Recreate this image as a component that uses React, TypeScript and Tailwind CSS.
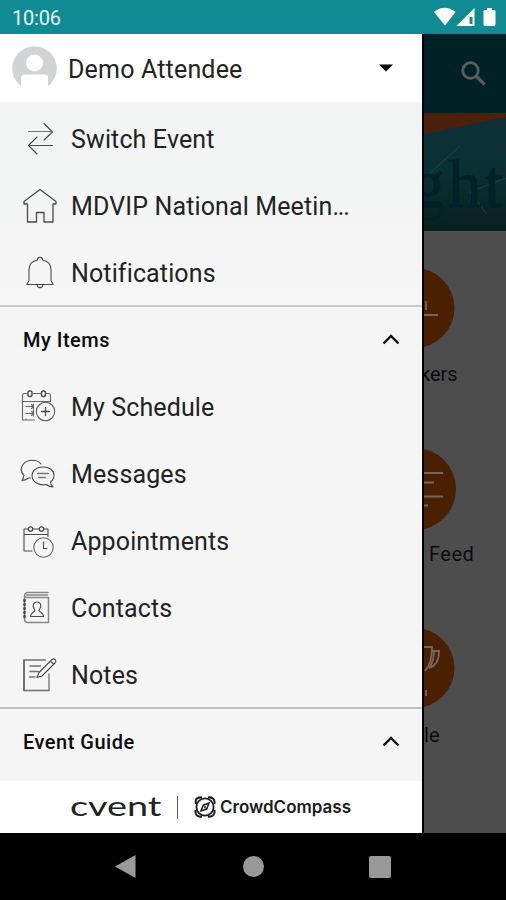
import React from 'react';

type IconProps = { children: React.ReactNode };

const LineIcon: React.FC<IconProps> = ({ children }) => (
  <svg width="40" height="40" viewBox="0 0 40 40" fill="none" stroke="#4a4a4a" strokeWidth="1.1" strokeLinejoin="round" strokeLinecap="round">
    {children}
  </svg>
);

const SwitchIcon = () => (
  <LineIcon>
    <path d="M8.5 11.5H32" stroke="#777" />
    <path d="M24 3.5L32.5 12L24 20" />
    <path d="M32.5 25.5H8.5M17 17L8.5 25.5L17 34" />
  </LineIcon>
);

const HomeIcon = () => (
  <LineIcon>
    <path d="M20 2.5L36 14.5V17H33V35H24V25.5H16.5V35H7.5V17H4V14.5Z" strokeWidth="1.3" />
  </LineIcon>
);

const BellIcon = () => (
  <LineIcon>
    <path d="M17.5 6C17.5 2.5 22.5 2.5 22.5 6C28 7 31 11 31 16V26C31 28 33 28.5 33 30.5H7C7 28.5 9 28 9 26V16C9 11 12 7 17.5 6Z" />
    <path d="M17 31C17.5 34.5 22.5 34.5 23 31" />
  </LineIcon>
);

const ScheduleIcon = () => (
  <LineIcon>
    <path d="M7.5 5.5H4.5Q2.5 5.5 2.5 7.500V13.500H30.500V7.500Q30.500 5.500 28.500 5.500H26M13 5.500H20.500M2.500 13.500V32H14.500M6 18.500H13.500M6 25.500H13.500M6 31V32M13.500 16V28" stroke="#666" />
    <path d="M11.500 16.500L13.500 18.500L11.500 20.500M11.500 23.500L13.500 25.500L11.500 27.500" stroke="#666" />
    <rect x="8" y="3" width="4" height="5.500" rx="1.800" strokeWidth="1.400" />
    <rect x="21.500" y="3" width="4" height="5.500" rx="1.800" strokeWidth="1.400" />
    <circle cx="25.500" cy="23.500" r="9.200" fill="#f5f5f5" stroke="#5c5c5c" />
    <path d="M25.500 19.500V27.500M21.500 23.500H29.500" strokeWidth="1.300" />
  </LineIcon>
);

const MessagesIcon = () => (
  <LineIcon>
    <path d="M21 9C17 4 7 4 3 9.500C0 14 1.500 18 4 20.500C3.500 22.500 3 24 2 25.500C5 25.500 6.500 24.500 8.500 23H10.500" />
    <path d="M23 12C29.500 12 34 15.500 34 20C34 23 32.500 25.500 30.500 27C30.500 29 31.500 30.500 33 32C30 32 28 31 26.500 29.500C19 31 12 27 12 20.500C12 15.500 16.500 12 23 12Z" />
    <path d="M17.500 18.500H28.500M18.500 22.500H25.500" stroke="#777" strokeWidth="1.300" />
  </LineIcon>
);

const AppointmentsIcon = () => (
  <LineIcon>
    <path d="M8 7H4V29H12M12.500 7H19M24 7H28V14.500M4 12.500H28" />
    <circle cx="10.500" cy="7" r="2.200" strokeWidth="1.300" />
    <circle cx="21.500" cy="7" r="2.200" strokeWidth="1.300" />
    <circle cx="23.500" cy="25.500" r="9.700" fill="#f5f5f5" stroke="#666" />
    <path d="M23.500 20V26.500H27" />
  </LineIcon>
);

const ContactsIcon = () => (
  <LineIcon>
    <path d="M28 3.500H8Q5 3.500 4.500 6.500V29.500Q4.500 33.500 8 33.500H28.500V8.500H7Q4.500 8.500 4.500 6.500M6.500 6H27.500" stroke="#888" strokeWidth="1.500" />
    <path d="M4.500 11V30" strokeWidth="2.500" strokeDasharray="1 3" />
    <path d="M17 13C13 13 12.500 17 14 19.500L15 21.500C14 23.500 10.500 23.500 10.500 27.500H23.500C23.500 23.500 20 23.500 19 21.500L20 19.500C21.500 17 21 13 17 13Z" />
  </LineIcon>
);

const NotesIcon = () => (
  <LineIcon>
    <path d="M25.500 4H4V34.500H29V18M10 10H20.500M10 15.500H18.500M9.500 21H15" stroke="#707070" strokeWidth="1.300" />
    <path d="M4 4V34.500" />
    <path d="M19 16.500L32 3.500Q34 2 35.500 4Q36.500 5.500 35 7L22 20L17 21.500Z M30.500 5L33.500 8" />
  </LineIcon>
);

type MenuItem = { label: string; icon: React.FC; truncated?: boolean };

const EVENT_LINKS: MenuItem[] = [
  { label: 'Switch Event', icon: SwitchIcon },
  { label: 'MDVIP National Meetin', icon: HomeIcon, truncated: true },
  { label: 'Notifications', icon: BellIcon },
];

const MY_ITEMS: MenuItem[] = [
  { label: 'My Schedule', icon: ScheduleIcon },
  { label: 'Messages', icon: MessagesIcon },
  { label: 'Appointments', icon: AppointmentsIcon },
  { label: 'Contacts', icon: ContactsIcon },
  { label: 'Notes', icon: NotesIcon },
];

const MenuRow: React.FC<{ item: MenuItem }> = ({ item }) => {
  const Icon = item.icon;
  return (
    <div className="flex h-[67px] shrink-0 items-center gap-[11px] pl-5">
      <Icon />
      <span className="text-[25px] leading-[30px] tracking-[0.13px] whitespace-nowrap text-[#222]">
        {item.label}
        {item.truncated && <span className="tracking-[-1.2px]">...</span>}
      </span>
    </div>
  );
};

const SectionHeader: React.FC<{ title: string }> = ({ title }) => (
  <div className="flex h-[67px] shrink-0 items-center justify-between pr-[22px] pb-0.5 pl-[23px]">
    <span className="text-[20px] leading-6 font-medium tracking-[0.5px] text-[#0a0a0a]">{title}</span>
    <svg width="18" height="12" viewBox="0 0 18 12" fill="none" stroke="#111" strokeWidth="2.4">
      <path d="M1.500 9.500L9 2L16.500 9.500" />
    </svg>
  </div>
);

const App: React.FC = () => {
  return (
    <div className="flex h-[900px] w-[506px] flex-col overflow-hidden bg-black font-['Roboto',sans-serif]">
      {/* Status bar */}
      <div className="flex h-[34px] shrink-0 items-center justify-between bg-[#118b93] pr-[9px] pl-3">
        <span className="pt-0.5 text-[20px] leading-6 tracking-[-0.2px] text-[#e8f8f9]">10:06</span>
        <svg width="63" height="20" viewBox="0 0 63 20" fill="#fff">
          <path d="M0 5Q10.500 -3.500 21.500 5L11 18.500Z" />
          <path d="M40.500 1V19H22.500Z" />
          <path d="M35.500 10H38.500V17H35.500Z" fill="#118b93" />
          <path d="M53 1H58V3H60Q61.500 3 61.500 4.500V17.500Q61.500 19 60 19H51Q49.500 19 49.500 17.500V4.500Q49.500 3 51 3H53Z" />
        </svg>
      </div>

      <div className="flex h-[799px] shrink-0">
        {/* Drawer */}
        <div className="flex w-[422px] shrink-0 flex-col bg-[#f5f5f5]">
          <div className="flex h-[68px] shrink-0 items-center bg-white pl-3">
            <svg width="45" height="45" viewBox="0 0 45 45" className="shrink-0">
              <circle cx="22.500" cy="22.500" r="22.300" fill="#d2d3d4" />
              <circle cx="22.500" cy="17" r="8.500" fill="#fff" />
              <path d="M9 45V32Q9 28.500 12.500 28.500H32.500Q36 28.500 36 32V45Z" fill="#fff" />
            </svg>
            <span className="ml-[11px] pt-[3px] text-[25px] leading-[30px] tracking-[0.18px] text-[#222]">Demo Attendee</span>
            <svg width="14" height="8" viewBox="0 0 14 8" className="mr-[29px] ml-auto">
              <path d="M0 0.500H14L7 7.500Z" fill="#000" />
            </svg>
          </div>

          <div className="flex h-[205px] shrink-0 flex-col border-b-2 border-[#c9c9c9] bg-linear-to-b from-[#f2f3f3] to-[#f6f6f6] pt-1">
            {EVENT_LINKS.map((item) => (
              <MenuRow key={item.label} item={item} />
            ))}
          </div>

          <div className="flex h-[402px] shrink-0 flex-col border-b-2 border-[#c0c0c0]">
            <SectionHeader title="My Items" />
            {MY_ITEMS.map((item) => (
              <MenuRow key={item.label} item={item} />
            ))}
          </div>

          <div className="h-[72px] shrink-0">
            <SectionHeader title="Event Guide" />
          </div>

          {/* Brand footer */}
          <div className="flex h-[52px] shrink-0 items-center bg-white pl-[70px]">
            <span className="w-[92px] shrink-0">
              <span className="inline-block origin-left scale-x-[1.4] font-['Lato',sans-serif] text-[27px] leading-7 text-[#222]">cvent</span>
            </span>
            <span className="ml-[15px] h-[23px] w-px bg-[#555]" />
            <svg width="22" height="22" viewBox="0 0 22 22" fill="none" stroke="#1b1b1b" className="ml-4 shrink-0">
              <path d="M2 8Q1 3.500 3 2.500Q5 1 8 1.500M14 1.500Q17 1 19 2.500Q21 4 20.500 8M20.500 14Q21 18 19 19.500Q17 21 14 20.500M8 20.500Q5 21 3 19.500Q1 18 1.500 14" strokeWidth="2" />
              <circle cx="11" cy="11" r="8.600" strokeWidth="1.800" />
              <path d="M15 7L12.800 12.800L7 15L9.200 9.200Z" strokeWidth="1.500" />
              <circle cx="11" cy="11" r="1" fill="#1b1b1b" stroke="none" />
            </svg>
            <span className="ml-1 font-['Inter',sans-serif] text-[17px] leading-5 font-semibold text-[#1b1b1b]">CrowdCompass</span>
          </div>
        </div>

        {/* Dimmed event home behind the drawer */}
        <div className="flex w-[84px] flex-col overflow-hidden border-l-2 border-black bg-[#4d4d4d]">
          <div className="flex h-[79px] shrink-0 items-center justify-end bg-[#002126] pr-5">
            <svg width="26" height="26" viewBox="0 0 26 26" fill="none" stroke="#5c5c5c" strokeWidth="2.8">
              <circle cx="10.500" cy="9.500" r="7.800" />
              <path d="M16 15L24.500 23.500" strokeWidth="3.200" />
            </svg>
          </div>

          <div className="relative flex h-[118px] shrink-0 justify-end overflow-hidden bg-linear-to-b from-[#0c3036] via-[#0b3034] to-[#08201f]">
            <svg width="82" height="118" viewBox="0 0 82 118" fill="none" className="absolute inset-0">
              <path d="M0 0H82V4L0 21Z" fill="#4b200d" />
              <path d="M4 62L36 33M46 79L82 65M46 79L62 100" stroke="#28484a" strokeWidth="0.800" />
            </svg>
            <span className="relative mt-[34px] font-['Liberation_Serif',serif] text-[67px] leading-[74px] tracking-[3px] text-[#012228] [-webkit-text-stroke:1px_#012228]">ght</span>
          </div>

          <div className="flex flex-col pt-[37px]">
            <svg width="82" height="80" viewBox="0 0 82 80" fill="none" className="shrink-0">
              <circle cx="-9.500" cy="40" r="40" fill="#4a2000" />
              <path d="M0 47H14M2 33V42" stroke="#74675f" strokeWidth="1.800" />
            </svg>
            <span className="mt-[14px] -ml-1 h-[86px] text-[20px] leading-6 text-[#0c0c0c]">kers</span>
            <svg width="82" height="82" viewBox="0 0 82 82" fill="none" className="shrink-0">
              <circle cx="-9" cy="41" r="41" fill="#4a2000" />
              <path d="M0 25H19M0 34.500H10M0 48.500H19M0 57.500H4" stroke="#74675f" strokeWidth="1.800" />
            </svg>
            <span className="mt-3 ml-[5px] h-[86px] text-[20px] leading-6 tracking-[0.5px] text-[#0c0c0c]">Feed</span>
            <svg width="82" height="80" viewBox="0 0 82 80" fill="none" className="shrink-0">
              <circle cx="-9.500" cy="40" r="40" fill="#4a2000" />
              <path d="M0 19H8Q8 36 1 43M8 23H15Q15 37 5 40M10 23Q10 32 6 39M2 62V68" stroke="#74675f" strokeWidth="1.800" />
            </svg>
            <span className="mt-[15px] text-[20px] leading-6 tracking-[0.2px] text-[#0c0c0c]">le</span>
          </div>
        </div>
      </div>

      {/* System navigation */}
      <div className="flex h-[67px] shrink-0 items-center pl-[115px]">
        <svg width="21" height="23" viewBox="0 0 21 23">
          <path d="M20.500 0V23L0 11.500Z" fill="#999" />
        </svg>
        <span className="ml-[107px] h-[21px] w-[21px] rounded-full bg-[#999]" />
        <span className="ml-[105px] h-[22px] w-[22px] rounded-[2px] bg-[#999]" />
      </div>
    </div>
  );
};

export default App;
